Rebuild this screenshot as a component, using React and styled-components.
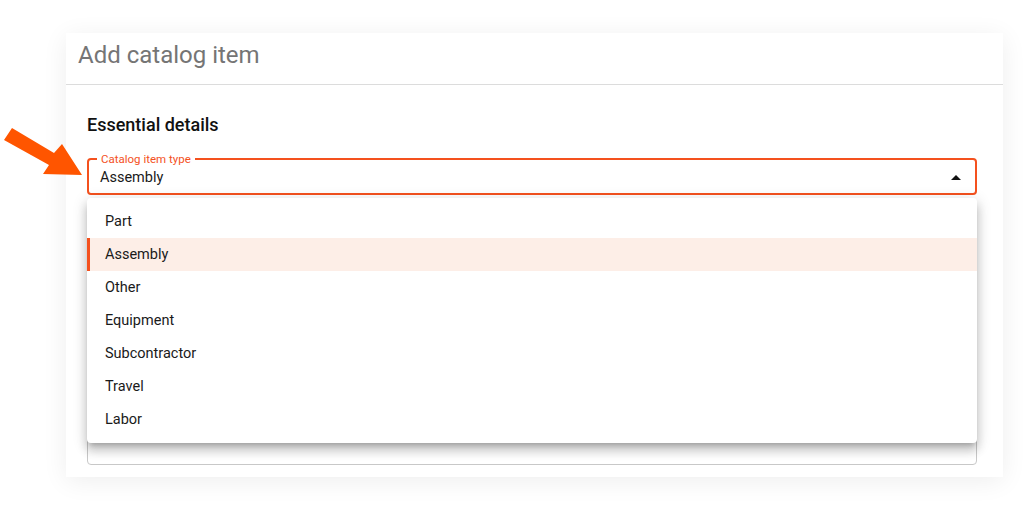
import React from 'react';
import styled, { createGlobalStyle } from 'styled-components';

const Global = createGlobalStyle`
  body {
    margin: 0;
    background: #ffffff;
    font-family: Roboto, "Liberation Sans", Arial, sans-serif;
  }
`;

const Page = styled.div`
  position: relative;
  width: 1036px;
  height: 511px;
  padding: 33px 0 0 66px;
  box-sizing: border-box;
`;

const Card = styled.div`
  width: 937px;
  height: 444px;
  background: #fff;
  box-shadow: 0 4px 24px rgba(0, 0, 0, 0.07);
  display: flex;
  flex-direction: column;
`;

const Header = styled.div`
  height: 52px;
  display: flex;
  align-items: center;
  padding: 0 0 8px 12px;
  border-bottom: 1px solid #dcdcdc;
  font-size: 24px;
  color: #757575;
  box-sizing: border-box;
`;

const Body = styled.div`
  flex: 1;
  padding: 28px 26px 12px 21px;
  display: flex;
  flex-direction: column;
`;

const SectionTitle = styled.h2`
  margin: 0 0 21px;
  font-size: 18px;
  line-height: 24px;
  font-weight: 500;
  color: #111;
`;

const FieldWrap = styled.div`
  position: relative;
`;

const Field = styled.div`
  position: relative;
  height: 37px;
  border: ${(p) => (p.$active ? '2px solid #f4511e' : '1px solid #c8c8c8')};
  border-radius: 4px;
  box-sizing: border-box;
  display: flex;
  align-items: center;
  padding: 2px 12px 0 11px;
  font-size: 14.5px;
  color: #1a1a1a;
`;

const Label = styled.span`
  position: absolute;
  top: -8px;
  left: 8px;
  padding: 0 4px;
  background: #fff;
  font-size: 11.5px;
  line-height: 14px;
  color: #f4511e;
`;

const Caret = styled.span`
  margin-left: auto;
  margin-right: 2px;
  width: 0;
  height: 0;
  border-left: 5px solid transparent;
  border-right: 5px solid transparent;
  border-bottom: 5px solid #111;
`;

const Spacer = styled.div`
  flex: 1;
`;

const Menu = styled.ul`
  position: absolute;
  top: 40px;
  left: 0;
  right: 0;
  margin: 0;
  padding: 7px 0;
  list-style: none;
  background: #fff;
  border-radius: 4px;
  z-index: 2;
  box-shadow: 0 5px 5px -3px rgba(0, 0, 0, 0.2), 0 8px 10px 1px rgba(0, 0, 0, 0.14),
    0 3px 14px 2px rgba(0, 0, 0, 0.12);
`;

const Item = styled.li`
  height: 33px;
  display: flex;
  align-items: center;
  padding-left: ${(p) => (p.$selected ? '15px' : '18px')};
  border-left: ${(p) => (p.$selected ? '3px solid #f4511e' : 'none')};
  background: ${(p) => (p.$selected ? '#fdeee7' : 'transparent')};
  font-size: 14.5px;
  color: #1a1a1a;
`;

const Pointer = styled.svg`
  position: absolute;
  left: 0;
  top: 125px;
`;

const options = ['Part', 'Assembly', 'Other', 'Equipment', 'Subcontractor', 'Travel', 'Labor'];

export default function App() {
  const selected = 'Assembly';
  return (
    <>
      <Global />
      <Page>
        <Pointer width="90" height="60" viewBox="0 0 90 60">
          <polygon
            points="4,15 12,3 54,28 62,19 82,50 43,49 49,40"
            fill="#ff5500"
          />
        </Pointer>
        <Card>
          <Header>Add catalog item</Header>
          <Body>
            <SectionTitle>Essential details</SectionTitle>
            <FieldWrap>
              <Field $active>
                <Label>Catalog item type</Label>
                {selected}
                <Caret />
              </Field>
              <Menu>
                {options.map((o) => (
                  <Item key={o} $selected={o === selected}>
                    {o}
                  </Item>
                ))}
              </Menu>
            </FieldWrap>
            <Spacer />
            <Field />
          </Body>
        </Card>
      </Page>
    </>
  );
}
